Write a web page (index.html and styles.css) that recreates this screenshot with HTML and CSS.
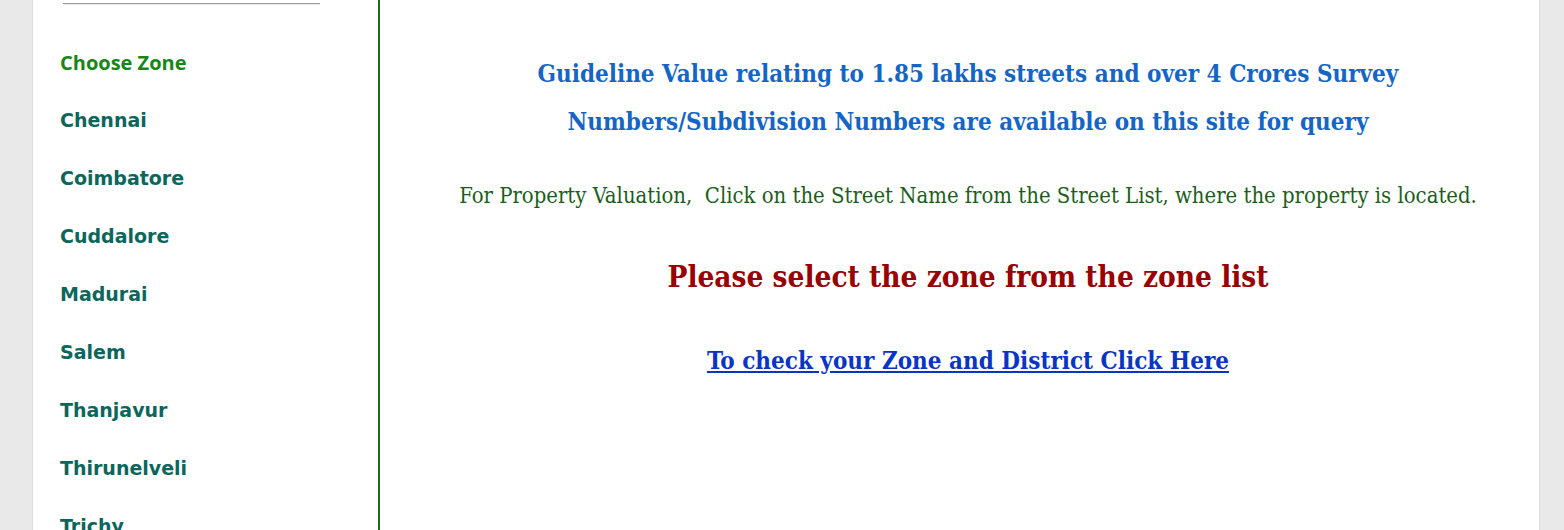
FILE: index.html
```html
<!DOCTYPE html>
<html>
<head>
<meta charset="utf-8">
<link rel="stylesheet" href="styles.css">
</head>
<body>
<div class="page">
  <aside class="sidebar">
    <div class="rule"></div>
    <ul class="zones">
      <li class="zone-title">Choose Zone</li>
      <li><a href="#">Chennai</a></li>
      <li><a href="#">Coimbatore</a></li>
      <li><a href="#">Cuddalore</a></li>
      <li><a href="#">Madurai</a></li>
      <li><a href="#">Salem</a></li>
      <li><a href="#">Thanjavur</a></li>
      <li><a href="#">Thirunelveli</a></li>
      <li><a href="#">Trichy</a></li>
    </ul>
  </aside>
  <main class="content">
    <h2 class="headline">Guideline Value relating to 1.85 lakhs streets and over 4 Crores Survey<br>Numbers/Subdivision Numbers are available on this site for query</h2>
    <p class="note">For Property Valuation,&nbsp; Click on the Street Name from the Street List, where the property is located.</p>
    <h3 class="select">Please select the zone from the zone list</h3>
    <p class="check"><a href="#">To check your Zone and District Click Here</a></p>
  </main>
</div>
</body>
</html>
```

FILE: styles.css
```css
html, body {
  margin: 0;
  padding: 0;
  background: #e9e9e9;
  height: 530px;
  overflow: hidden;
}
.page {
  display: flex;
  margin-left: 32px;
  width: 1506px;
  min-height: 600px;
  background: #ffffff;
  border-left: 1px solid #dcdcdc;
  border-right: 1px solid #dcdcdc;
}
.sidebar {
  width: 345px;
  flex: none;
  border-right: 2px solid #1f6b1f;
}
.rule {
  margin: 3px 0 0 30px;
  width: 257px;
  height: 0;
  border-top: 1px solid #9a9a9a;
  border-bottom: 1px solid #eeeeee;
}
.zones {
  list-style: none;
  margin: 0;
  padding: 0 0 0 27px;
}
.zones li {
  height: 58px;
  display: flex;
  align-items: center;
  font-family: "DejaVu Sans", Verdana, sans-serif;
  font-weight: bold;
  font-size: 19px;
}
.zones li:first-child {
  margin-top: 28px;
}
.zones a {
  color: #0c665c;
  text-decoration: none;
}
.zones .zone-title {
  font-family: "Open Sans", sans-serif;
  font-weight: 700;
  font-size: 20px;
  color: #168616;
}
.content {
  flex: 1;
  padding-left: 17px;
  text-align: center;
  font-family: "DejaVu Serif Condensed", "DejaVu Serif", serif;
  font-stretch: condensed;
}
.headline {
  margin: 50px 0 0;
  font-size: 24px;
  line-height: 48px;
  font-weight: bold;
  color: #1565c4;
}
.note {
  margin: 36px 0 0;
  font-size: 21.9px;
  line-height: 28px;
  font-weight: normal;
  color: #1b5e1b;
}
.select {
  margin: 47px 0 0;
  font-size: 29.5px;
  line-height: 40px;
  font-weight: bold;
  color: #990000;
}
.check {
  margin: 49px 0 0;
  font-size: 24px;
  line-height: 30px;
  font-weight: bold;
}
.check a {
  color: #0a35c4;
  text-decoration: underline;
}
```
